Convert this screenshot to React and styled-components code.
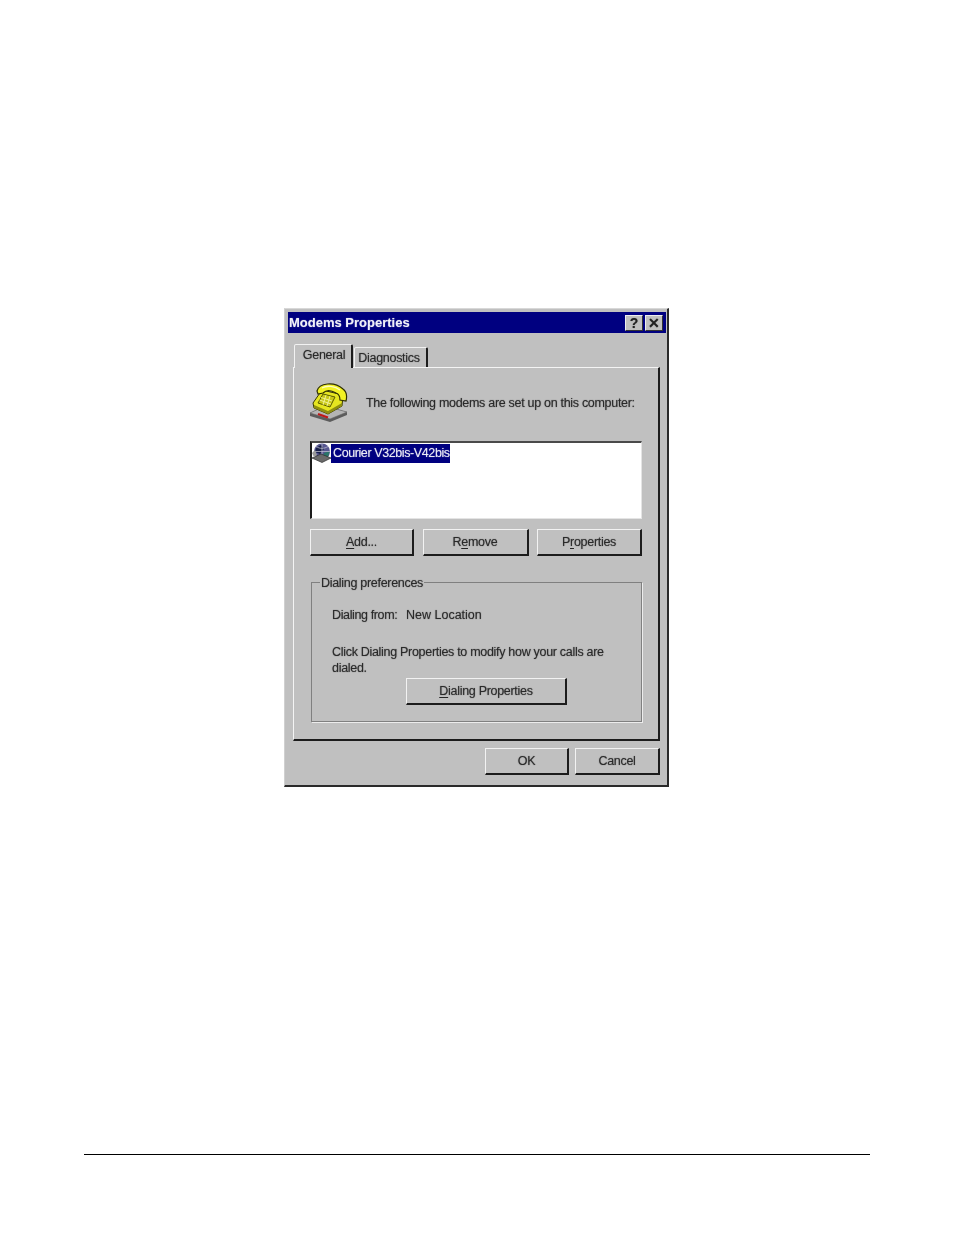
import React from "react";
import styled, { createGlobalStyle } from "styled-components";

const GlobalStyle = createGlobalStyle`
  html, body {
    margin: 0;
    padding: 0;
    background: #fff;
  }
  body {
    font-family: "Liberation Sans", Arial, sans-serif;
  }
`;

const Page = styled.div`
  width: 954px;
  height: 1235px;
  box-sizing: border-box;
  padding: 308px 84px 0;
  overflow: hidden;
`;

const Dialog = styled.div`
  width: 385px;
  height: 479px;
  margin-left: 200px;
  padding: 4px 1px 0 4px;
  box-sizing: border-box;
  background: #c0c0c0;
  border-top: 1px solid #d8d8d8;
  border-left: 1px solid #d0d0d0;
  border-right: 2px solid #2a2a2a;
  border-bottom: 2px solid #2a2a2a;
  color: rgba(20, 20, 20, 0.72);
  text-shadow: 0 0 1px rgba(20, 20, 20, 0.65);
  font-size: 12.5px;
  letter-spacing: -0.3px;
  filter: blur(0.5px);
`;

const TitleBar = styled.div`
  height: 21px;
  margin: -1px 0 0 -1px;
  padding: 0 3px 0 1px;
  display: flex;
  align-items: center;
  justify-content: space-between;
  background: #000080;
  color: rgba(255, 255, 255, 0.88);
  text-shadow: 0 0 1px rgba(255, 255, 255, 0.6);
  font-weight: 700;
  font-size: 13px;
  letter-spacing: 0;
`;

const TitleButtons = styled.div`
  display: flex;
  gap: 2px;
`;

const TitleButton = styled.div`
  width: 18px;
  height: 16px;
  display: flex;
  align-items: center;
  justify-content: center;
  background: #c0c0c0;
  color: #222;
  text-shadow: 0 0 1px rgba(20, 20, 20, 0.5);
  font-size: 14px;
  font-weight: 700;
  box-sizing: border-box;
  border: 1px solid;
  border-color: #eee #333 #333 #eee;
`;

const Body = styled.div`
  padding: 11px 0 0 4px;
`;

const TabRow = styled.div`
  height: 23px;
  display: flex;
  align-items: flex-end;
  padding-left: 1px;
  gap: 1px;
`;

const Tab = styled.div`
  height: ${(p) => (p.$active ? "24px" : "20px")};
  width: ${(p) => p.$width}px;
  box-sizing: border-box;
  padding: ${(p) => (p.$active ? "0 0 4px 2px" : "0 3px 0 0")};
  display: flex;
  align-items: center;
  justify-content: center;
  background: #c0c0c0;
  border: 1px solid;
  border-color: #f2f2f2 #1c1c1c transparent #f2f2f2;
  border-right-width: 2px;
  border-bottom: 0;
  border-radius: 2px 2px 0 0;
  position: relative;
  z-index: ${(p) => (p.$active ? 1 : 0)};
  margin-bottom: ${(p) => (p.$active ? "-1px" : "0")};
`;

const Panel = styled.div`
  width: 367px;
  height: 374px;
  box-sizing: border-box;
  padding: 15px 16px 0 16px;
  border-top: 1px solid #f4f4f4;
  border-left: 1px solid #f4f4f4;
  border-right: 2px solid #1c1c1c;
  border-bottom: 2px solid #1c1c1c;
`;

const Intro = styled.div`
  height: 40px;
  display: flex;
  align-items: center;
  gap: 18px;
  white-space: nowrap;
`;

const ListBox = styled.div`
  height: 78px;
  margin-top: 18px;
  box-sizing: border-box;
  background: #fff;
  padding: 0;
  display: flex;
  align-items: flex-start;
  border-top: 2px solid #4a4a4a;
  border-left: 2px solid #1c1c1c;
  border-right: 1px solid #e4e4e4;
  border-bottom: 1px solid #e4e4e4;
`;

const ListItem = styled.span`
  height: 19px;
  margin: 1px 0 0 0;
  padding: 0 0 0 2px;
  background: #000080;
  color: rgba(255, 255, 255, 0.85);
  text-shadow: 0 0 1px rgba(255, 255, 255, 0.6);
  line-height: 19px;
  letter-spacing: -0.4px;
`;

const ButtonRow = styled.div`
  margin-top: 10px;
  display: flex;
  justify-content: space-between;
`;

const Button = styled.div`
  width: ${(p) => p.$width}px;
  height: 27px;
  flex: none;
  box-sizing: border-box;
  display: flex;
  align-items: center;
  justify-content: center;
  background: #c0c0c0;
  border: 1px solid;
  border-color: #f2f2f2 #1c1c1c #1c1c1c #f2f2f2;
  border-right-width: 2px;
  border-bottom-width: 2px;
  u {
    text-underline-offset: 2px;
  }
`;

const Group = styled.div`
  position: relative;
  height: 140px;
  margin: 26px 0 0 1px;
  padding: 24px 0 0 20px;
  box-sizing: border-box;
  border: 1px solid #808080;
  box-shadow: 1px 1px 0 #ececec;
`;

const Legend = styled.span`
  position: absolute;
  top: -8px;
  left: 8px;
  padding: 0 1px;
  background: #c0c0c0;
  line-height: 16px;
`;

const FromRow = styled.div`
  display: flex;
  line-height: 16px;
  letter-spacing: 0;
`;

const FromLabel = styled.span`
  width: 74px;
  letter-spacing: -0.37px;
`;

const Paragraph = styled.p`
  margin: 21px 0 2px;
  width: 285px;
  line-height: 16px;
`;

const GroupButton = styled(Button)`
  margin-left: 74px;
`;

const Footer = styled.div`
  width: 367px;
  margin-top: 7px;
  display: flex;
  justify-content: flex-end;
  gap: 6px;
`;

const Rule = styled.div`
  height: 1px;
  margin-top: 367px;
  background: #000;
`;

const PhoneIcon = () => (
  <svg width="38" height="40" viewBox="0 0 38 40" style={{ flex: "none" }}>
    <path d="M0 30 L15 23 L37 29 L37 32 L20 39 L0 33 Z" fill="#5c5c5c" />
    <path d="M0 30 L15 23 L37 29 L20 36 Z" fill="#b4b4b4" stroke="#666" strokeWidth="0.6" />
    <path d="M8 31 L18 34.5" stroke="#c01818" strokeWidth="2.2" />
    <path d="M3 20 L12 7 L33 12 L32 23 L18 31 L4 25 Z" fill="#e6e620" stroke="#3c3c00" strokeWidth="1" />
    <path d="M4 22 L18 28 L32 20 L32 23 L18 31 L4 25 Z" fill="#8f8f10" />
    <path d="M13 11 L25 14 L20 24 L8 20 Z" fill="#c8c818" stroke="#5a5a00" strokeWidth="1" />
    <path d="M11 14.5 L22 18 M9.5 17 L21 21 M16 12 L13 22 M20 13 L17 23" stroke="#f4f4a0" strokeWidth="0.9" />
    <path d="M7 8 C9 0 24 -2 33 6 C37 9 37 14 36 18 L30 17 C30 13 29 11 26 10 C21 7 16 7 13 10 L8 11 Z" fill="#f2f224" stroke="#303000" strokeWidth="1.2" />
    <path d="M12 5 C17 2 25 3 30 7" stroke="#fdfdc0" strokeWidth="1.3" fill="none" />
  </svg>
);

const ModemIcon = () => (
  <svg width="19" height="20" viewBox="0 0 19 20" style={{ flex: "none" }}>
    <circle cx="10" cy="8.5" r="8" fill="#565690" />
    <path d="M4 5 L9 2 L12 6 L8 11 L3 9 Z" fill="#171f48" />
    <path d="M12 10 L18 8 L16 14 L11 15 Z" fill="#2a7468" />
    <path d="M2 8.5 H18 M10 1 V16 M4 3.5 C8 6 12 6 16 3.5" stroke="#c8c8d8" strokeWidth="0.7" fill="none" />
    <path d="M0 15 L9 11 L19 15 L10 19.5 Z" fill="#6a6a6a" stroke="#2c2c2c" strokeWidth="0.7" />
    <path d="M0 10 L3 7 L5 12 L2 14 Z" fill="#9a9a9a" />
  </svg>
);

const App = () => (
  <>
    <GlobalStyle />
    <Page>
      <Dialog>
        <TitleBar>
          <span>Modems Properties</span>
          <TitleButtons>
            <TitleButton>?</TitleButton>
            <TitleButton>✕</TitleButton>
          </TitleButtons>
        </TitleBar>
        <Body>
          <TabRow>
            <Tab $active $width={59}>General</Tab>
            <Tab $width={74}>Diagnostics</Tab>
          </TabRow>
          <Panel>
            <Intro>
              <PhoneIcon />
              <span>The following modems are set up on this computer:</span>
            </Intro>
            <ListBox>
              <ModemIcon />
              <ListItem>Courier V32bis-V42bis</ListItem>
            </ListBox>
            <ButtonRow>
              <Button $width={104}><span><u>A</u>dd...</span></Button>
              <Button $width={106}><span>R<u>e</u>move</span></Button>
              <Button $width={105}><span>P<u>r</u>operties</span></Button>
            </ButtonRow>
            <Group>
              <Legend>Dialing preferences</Legend>
              <FromRow>
                <FromLabel>Dialing from:</FromLabel>
                <span>New Location</span>
              </FromRow>
              <Paragraph>Click Dialing Properties to modify how your calls are dialed.</Paragraph>
              <GroupButton $width={161}><span><u>D</u>ialing Properties</span></GroupButton>
            </Group>
          </Panel>
          <Footer>
            <Button $width={84}>OK</Button>
            <Button $width={85}>Cancel</Button>
          </Footer>
        </Body>
      </Dialog>
      <Rule />
    </Page>
  </>
);

export default App;
